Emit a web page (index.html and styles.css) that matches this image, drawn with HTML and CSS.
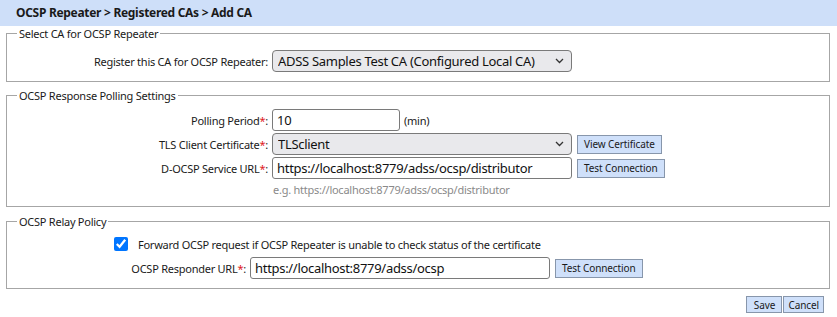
FILE: index.html
```html
<!DOCTYPE html>
<html lang="en">
<head>
  <meta charset="UTF-8">
  <title>Add CA</title>
  <link rel="stylesheet" href="styles.css">
</head>
<body>

  <div class="titlebar">OCSP Repeater &gt; Registered CAs &gt; Add CA</div>

  <div class="page">

    <!-- CA selection -->
    <fieldset class="group group-first">
      <legend>Select CA for OCSP Repeater</legend>
      <div class="row">
        <label class="lbl">Register this CA for OCSP Repeater:</label>
        <span class="select-wrap">
          <select class="ctl ctl-wide">
            <option>ADSS Samples Test CA (Configured Local CA)</option>
          </select>
          <svg class="chev" width="9" height="6" viewBox="0 0 9 6"><path d="M1 1l3.5 3.5L8 1" fill="none" stroke="#333" stroke-width="1.3"/></svg>
        </span>
      </div>
    </fieldset>

    <!-- Polling -->
    <fieldset class="group">
      <legend>OCSP Response Polling Settings</legend>
      <div class="row">
        <label class="lbl">Polling Period<span class="req">*</span>:</label>
        <input class="ctl ctl-short" type="text" value="10">
        <span class="unit">(min)</span>
      </div>
      <div class="row">
        <label class="lbl">TLS Client Certificate<span class="req">*</span>:</label>
        <span class="select-wrap">
          <select class="ctl ctl-wide">
            <option>TLSclient</option>
          </select>
          <svg class="chev" width="9" height="6" viewBox="0 0 9 6"><path d="M1 1l3.5 3.5L8 1" fill="none" stroke="#333" stroke-width="1.3"/></svg>
        </span>
        <button class="btn btn-side">View Certificate</button>
      </div>
      <div class="row">
        <label class="lbl">D-OCSP Service URL<span class="req">*</span>:</label>
        <input class="ctl ctl-wide" type="text" value="https://localhost:8779/adss/ocsp/distributor">
        <button class="btn btn-side">Test Connection</button>
      </div>
      <div class="hint">e.g. https://localhost:8779/adss/ocsp/distributor</div>
    </fieldset>

    <!-- Relay -->
    <fieldset class="group">
      <legend>OCSP Relay Policy</legend>
      <div class="check-row">
        <input class="chk" type="checkbox" checked>
        <span>Forward OCSP request if OCSP Repeater is unable to check status of the certificate</span>
      </div>
      <div class="row row-relay">
        <label class="lbl lbl-relay">OCSP Responder URL<span class="req">*</span>:</label>
        <input class="ctl ctl-wide" type="text" value="https://localhost:8779/adss/ocsp">
        <button class="btn btn-side">Test Connection</button>
      </div>
    </fieldset>

    <div class="actions">
      <button class="btn">Save</button>
      <button class="btn">Cancel</button>
    </div>

  </div>

</body>
</html>
```

FILE: styles.css
```css
* {
  box-sizing: border-box;
}

html, body {
  margin: 0;
  padding: 0;
  background: #fff;
  font-family: "Noto Sans", "DejaVu Sans", sans-serif;
  font-size: 11px;
  letter-spacing: -0.25px;
  color: #1a1a1a;
}

.titlebar {
  height: 26px;
  line-height: 26px;
  padding-left: 16px;
  background: #cedff9;
  font-weight: bold;
  font-size: 12px;
  letter-spacing: -0.3px;
  color: #1a1a1a;
}

.page {
  padding: 0 7px 0 6px;
}

.group {
  margin: 6px 0 0;
  padding: 6px 0 9px;
  border: 1px solid #a6a6a6;
  min-width: 0;
}

.group-first {
  margin-top: 0;
  padding-top: 9px;
}

.group + .group + .group {
  margin-top: 7px;
  padding-top: 7px;
}

.group legend {
  margin-left: 10px;
  padding: 0 2px;
  line-height: 15px;
}

.row {
  display: flex;
  align-items: center;
  height: 22px;
}

.row + .row {
  margin-top: 2px;
}

.lbl {
  width: 261px;
  margin-right: 4px;
  text-align: right;
  flex-shrink: 0;
}

.lbl-relay {
  width: 239px;
}

.req {
  color: #e0201c;
}

.ctl {
  height: 22px;
  margin: 0;
  padding: 0 4px;
  border: 1px solid #7a7a7a;
  border-radius: 3px;
  background: #fff;
  font-family: "Noto Sans", "DejaVu Sans", sans-serif;
  font-size: 13px;
  letter-spacing: -0.3px;
  color: #111;
}

.ctl-wide {
  width: 300px;
}

.ctl-short {
  width: 128px;
}

select.ctl {
  appearance: none;
  background: #e9e9ec;
  border-radius: 4px;
  padding-left: 5px;
}

.select-wrap {
  position: relative;
  display: inline-flex;
}

.chev {
  position: absolute;
  right: 8px;
  top: 8px;
  pointer-events: none;
}

.unit {
  margin-left: 4px;
}

.btn {
  margin: 0;
  padding: 0 6px;
  height: 19px;
  border: 1px solid #8796ab;
  border-radius: 0;
  background: #cfe0fa;
  font-family: "Noto Sans", "DejaVu Sans", sans-serif;
  font-size: 10px;
  letter-spacing: -0.1px;
  color: #1a1a1a;
}

.btn-side {
  margin-left: 5px;
}

.hint {
  margin-top: 3px;
  padding-left: 266px;
  line-height: 15px;
  color: #8a8a8a;
}

.check-row {
  display: flex;
  align-items: center;
  height: 16px;
  padding-left: 107px;
}

.chk {
  width: 14px;
  height: 14px;
  margin: 0 10px 0 0;
}

.row-relay {
  margin-top: 5px;
}

.actions {
  display: flex;
  justify-content: flex-end;
  gap: 1px;
  margin-top: 7px;
  padding-right: 6px;
}

.actions .btn {
  height: 17px;
  min-width: 36px;
  padding: 0 4px;
}
```
